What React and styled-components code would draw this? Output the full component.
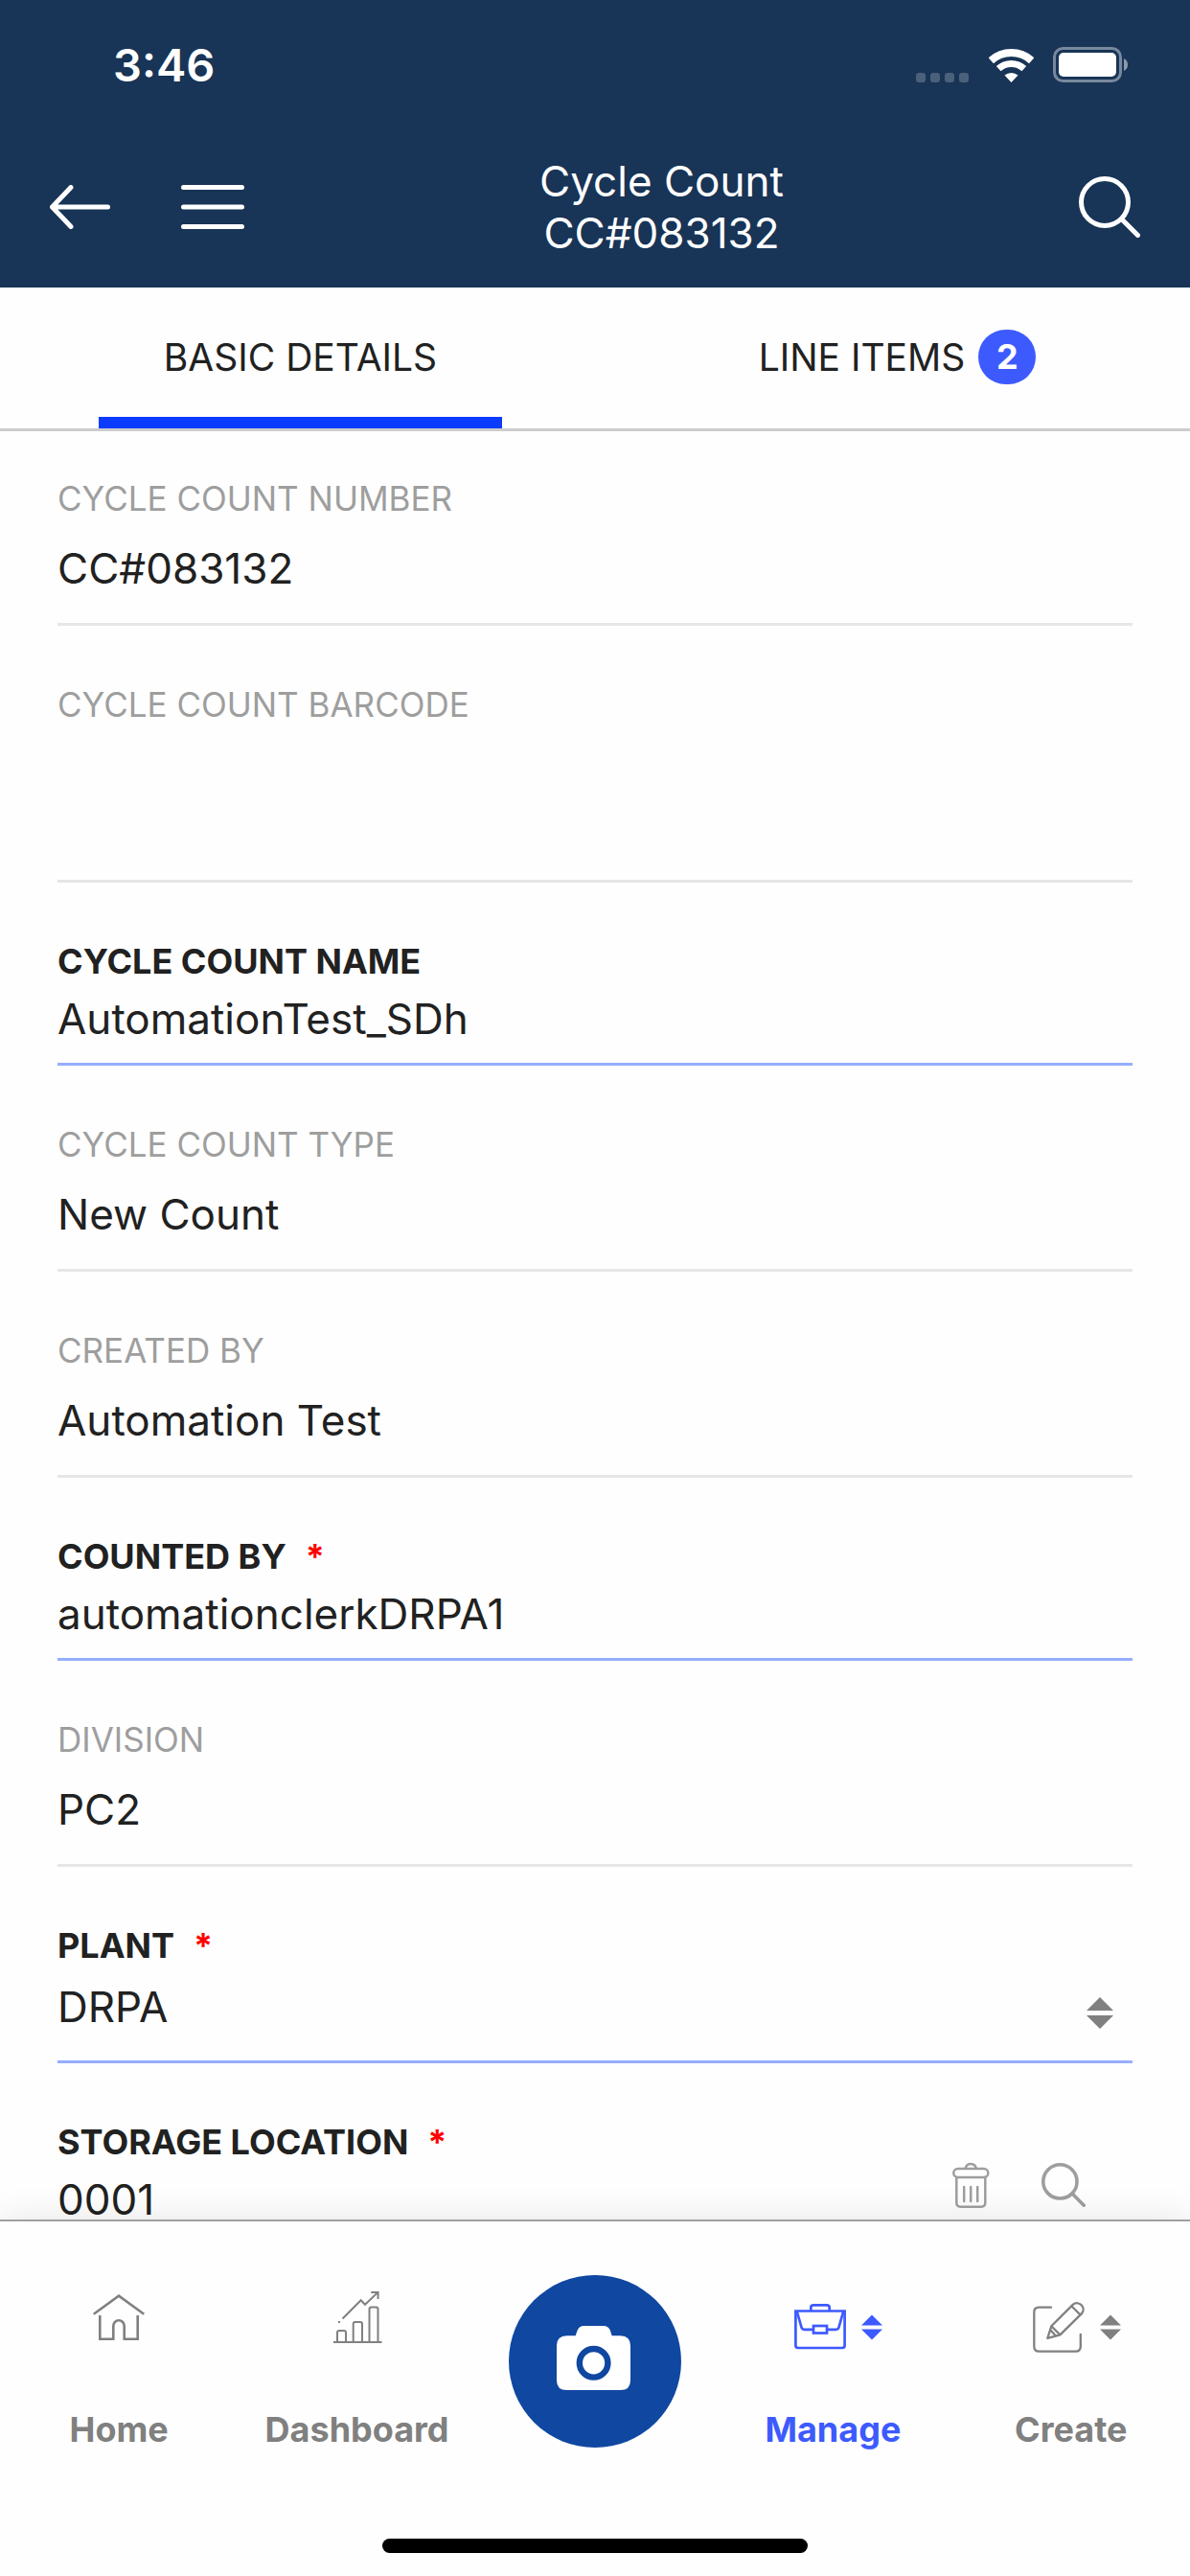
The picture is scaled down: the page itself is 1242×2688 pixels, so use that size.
import React, { useState } from 'react';
import styled, { createGlobalStyle } from 'styled-components';

const GlobalStyle = createGlobalStyle`
  * {
    box-sizing: border-box;
  }

  body {
    margin: 0;
    background: #fefefe;
    color: #212121;
    font-family: Inter, 'Liberation Sans', sans-serif;
  }

  button,
  input,
  select {
    margin: 0;
    padding: 0;
    border: 0;
    background: none;
    color: inherit;
    font-family: inherit;
  }

  svg {
    display: block;
    flex: none;
  }
`;

const Screen = styled.div`
  display: flex;
  flex-direction: column;
  height: 100vh;
`;

const Header = styled.header`
  flex: none;
  background: #183456;
  color: white;
`;

const StatusBar = styled.div`
  display: flex;
  align-items: center;
  justify-content: space-between;
  height: 132px;
  padding: 3px 64px 0 118px;
  font-size: 47px;
  font-weight: 600;
`;

const StatusIcons = styled.div`
  display: flex;
  align-items: center;
  gap: 20px;
`;

const Toolbar = styled.div`
  display: flex;
  align-items: center;
  height: 168px;
  padding: 0 52px;
`;

const IconButton = styled.button`
  cursor: pointer;
`;

const ToolbarLeft = styled.div`
  display: flex;
  align-items: center;
  gap: 74px;
`;

const Title = styled.h1`
  flex: 1;
  margin: 0;
  font-size: 44px;
  font-weight: 400;
  line-height: 54px;
  text-align: center;
`;

const Tabs = styled.div`
  display: grid;
  grid-template-columns: 1fr 1fr;
  gap: 202px;
  flex: none;
  height: 150px;
  padding: 0 95px 0 103px;
  border-bottom: 3px solid #ccc;
`;

const Tab = styled.button`
  display: flex;
  align-items: center;
  justify-content: center;
  gap: 14px;
  padding-top: 10px;
  border-bottom: 12px solid ${props => (props.$active ? '#0b3bfc' : 'transparent')};
  font-size: 39px;
  white-space: nowrap;
  cursor: pointer;
`;

const Badge = styled.span`
  width: 60px;
  border-radius: 30px;
  background: #3d5afe;
  color: white;
  font-size: 36px;
  font-weight: 700;
  line-height: 57px;
`;

const FormWrapper = styled.form`
  display: flex;
  flex-direction: column;
  flex: 1;
  gap: 58px;
  min-height: 0;
  padding: 46px 60px 58px;
  overflow: auto;
  scrollbar-width: none;
`;

const FormField = styled.div`
  display: flex;
  flex: none;
  border-bottom: 3px solid ${props => (props.$editable ? '#96aeff' : '#e6e6e6')};
`;

const FieldBody = styled.div`
  display: flex;
  flex: 1;
  flex-direction: column;
  min-width: 0;
`;

const Label = styled.label`
  color: ${props => (props.$editable ? '#212121' : '#9e9e9e')};
  font-size: ${props => (props.$editable ? '36px' : '35px')};
  font-weight: ${props => (props.$editable ? 700 : 400)};
  line-height: 48px;
`;

const Required = styled.span`
  margin-left: 20px;
  color: red;
`;

const StyledInput = styled.input`
  width: 100%;
  height: 72px;
  margin: ${props => (props.readOnly ? '13px 0 21px' : '0 0 10px')};
  font-size: 44px;
  outline: none;
`;

const EmptyValue = styled(StyledInput)`
  height: 125px;
`;

const SelectRow = styled.div`
  display: flex;
  align-items: center;
  height: 96px;
  padding: 0 20px 4px 0;
`;

const StyledSelect = styled.select`
  flex: 1;
  height: 72px;
  margin-bottom: 12px;
  appearance: none;
  font-size: 44px;
  outline: none;
`;

const FieldActions = styled.div`
  display: flex;
  align-items: center;
  gap: 54px;
  padding: 8px 49px 0 0;
  color: #9e9e9e;
`;

const BottomBar = styled.footer`
  position: relative;
  flex: none;
  padding-bottom: 24px;
  border-top: 2px solid #a0a0a0;
  background: #fefefe;
  box-shadow: 0 0 36px rgba(0, 0, 0, 0.1);
`;

const Nav = styled.nav`
  display: grid;
  grid-template-columns: repeat(5, 1fr);
  justify-items: center;
  height: 242px;
  padding-top: 56px;
`;

const NavLink = styled.a`
  display: flex;
  flex-direction: column;
  align-items: center;
  gap: 56px;
  padding-top: 7px;
  color: ${props => (props.$active ? '#3d5afe' : '#808080')};
  font-size: 36px;
  font-weight: 700;
  line-height: 48px;
  text-decoration: none;
`;

const NavIcon = styled.span`
  display: flex;
  align-items: center;
  gap: 16px;
  height: 74px;
  padding: ${props => (props.$menu ? '20px 0 0 12px' : '0')};
`;

const CameraButton = styled.button`
  display: flex;
  align-items: center;
  justify-content: center;
  width: 180px;
  height: 180px;
  border-radius: 50%;
  background: #0f47a1;
  cursor: pointer;
`;

const HomeIndicator = styled.div`
  width: 444px;
  height: 15px;
  margin: 89px auto 0;
  border-radius: 8px;
  background: black;
`;

const SignalIcon = () => (
  <svg width="56" height="36" fill="#fff" opacity="0.22">
    <rect x="0" y="26" width="10" height="10" rx="3" />
    <rect x="15" y="26" width="10" height="10" rx="3" />
    <rect x="30" y="26" width="10" height="10" rx="3" />
    <rect x="45" y="26" width="10" height="10" rx="3" />
  </svg>
);

const WifiIcon = () => (
  <svg width="47" height="36" fill="none" stroke="#fff">
    <path d="M2.3 13.2A31.5 31.5 0 0 1 44.7 13.2" strokeWidth="8" />
    <path d="M10.2 21.6A19.6 19.6 0 0 1 36.8 21.6" strokeWidth="7" />
    <path d="M23.5 36L16.5 28.6A10.5 10.5 0 0 1 30.5 28.6Z" fill="#fff" stroke="none" />
  </svg>
);

const BatteryIcon = () => (
  <svg width="79" height="37" fill="#fff">
    <rect x="1.5" y="1.5" width="69" height="34" rx="9" fill="none" stroke="#fff" strokeWidth="3" opacity="0.42" />
    <rect x="6" y="6" width="60" height="25" rx="5" />
    <path d="M74 12Q78 14 78 18.5T74 25Z" opacity="0.5" />
  </svg>
);

const BackIcon = () => (
  <svg width="63" height="46" fill="none" stroke="#fff" strokeWidth="5" strokeLinecap="round" strokeLinejoin="round">
    <path d="M60.5 23H2.5M22 2.5L2.5 23L22 43.5" />
  </svg>
);

const MenuIcon = () => (
  <svg width="66" height="46" stroke="#fff" strokeWidth="5" strokeLinecap="round">
    <path d="M2.5 2.5H63.5M2.5 23H63.5M2.5 43.5H63.5" />
  </svg>
);

const SearchIcon = ({ size }) => (
  <svg width={size} height={size} viewBox="0 0 64 64" fill="none" stroke="currentColor" strokeWidth="5" strokeLinecap="round">
    <circle cx="27" cy="27" r="24.5" />
    <path d="M45 45L61.5 61.5" />
  </svg>
);

const TrashIcon = () => (
  <svg width="39" height="48" fill="none" stroke="currentColor" strokeWidth="2.5" strokeLinecap="round">
    <path d="M13.7 6.5A5.6 5.6 0 0 1 24.7 6.5" />
    <rect x="1.3" y="7" width="36" height="9" rx="4.5" />
    <path d="M4.3 16V42.5Q4.3 46.7 8.5 46.7H30Q34.3 46.7 34.3 42.5V16M12.2 26V41M19.2 26V41M26.2 26V41" />
  </svg>
);

const SortIcon = ({ width, height }) => (
  <svg width={width} height={height} viewBox="0 0 28 33" fill={width > 24 ? '#808080' : 'currentColor'}>
    <path d="M14 0L28 14H0ZM0 19H28L14 33Z" />
  </svg>
);

const HomeIcon = () => (
  <svg width="54" height="48" fill="none" stroke="currentColor" strokeWidth="2.6">
    <path d="M.7 20.8L27 1.6L53.3 20.8" />
    <path d="M7.3 22V46.7H21.3V33A5.6 5.6 0 0 1 32.7 33V46.7H46.7V22" />
  </svg>
);

const DashboardIcon = () => (
  <svg width="52" height="54" fill="none" stroke="currentColor" strokeWidth="2">
    <path d="M1 53H51.5" />
    <path d="M5 53V43Q5 41 7 41H12Q14 41 14 43V53M21.7 53V34Q21.7 32 23.7 32H29Q31 32 31 34V53M38.5 53V18.5Q38.5 16.5 40.5 16.5H45.5Q47.5 16.5 47.5 18.5V53" />
    <path d="M10.5 28.5L29.7 9.3L34 13.8L47 1.4M40.3 1H47.6V8M6 32H8" />
  </svg>
);

const BriefcaseIcon = () => (
  <svg width="54" height="48" fill="none" stroke="currentColor" strokeWidth="2.7">
    <path d="M1.4 7.5H52.6V43.5Q52.6 46 50 46H4Q1.4 46 1.4 43.5Z" />
    <path d="M17.3 7.5V4Q17.3 1.4 20 1.4H34Q36.7 1.4 36.7 4V7.5" />
    <path d="M2.8 8L7.5 24.5Q8.2 26.8 10.5 26.8H20M51.2 8L46.5 24.5Q45.8 26.8 43.5 26.8H34" />
    <rect x="20" y="23" width="14" height="7.5" />
  </svg>
);

const CreateIcon = () => (
  <svg width="54" height="54" fill="none" stroke="currentColor" strokeWidth="2.3" strokeLinecap="round" strokeLinejoin="round">
    <path d="M19 6.7H6.3Q1.3 6.7 1.3 11.7V47.5Q1.3 52.7 6.5 52.7H44.5Q49.8 52.7 49.8 47.5V34.8" />
    <path d="M15.3 38.8L19.3 26.3L42 3.6A6.6 6.6 0 0 1 51.2 12.9L28.4 35.4L15.3 38.8M19.3 26.3L28.4 35.4M19 31L23.5 36M40.5 5.5L49.3 14.3" />
  </svg>
);

const CameraIcon = () => (
  <svg width="80" height="74">
    <path
      fill="#fff"
      d="M10.5 10.3H19.7L21.5 5Q23.4 0 28.5 0H48.8Q54 0 56 5L57.6 10.3H66.5Q77 10.8 77 20.5V57Q77 67 66.5 67H10.5Q0 67 0 57V20.5Q0 10.8 10.5 10.3Z"
    />
    <circle cx="38.6" cy="38.8" r="14.8" fill="none" stroke="#0f47a1" strokeWidth="6.4" />
  </svg>
);

const FieldLabel = ({ id, text, editable, required }) => (
  <Label htmlFor={id} $editable={editable}>
    {text}
    {required && <Required>*</Required>}
  </Label>
);

const ReadOnlyField = ({ id, label, value }) => (
  <FormField>
    <FieldBody>
      <FieldLabel id={id} text={label} />
      {value ? (
        <StyledInput id={id} type="text" value={value} readOnly />
      ) : (
        <EmptyValue id={id} type="text" value="" readOnly />
      )}
    </FieldBody>
  </FormField>
);

const TextField = ({ id, label, value, onChange, required, children }) => (
  <FormField $editable>
    <FieldBody>
      <FieldLabel id={id} text={label} required={required} editable />
      <StyledInput id={id} name={id} type="text" value={value} onChange={onChange} />
    </FieldBody>
    {children}
  </FormField>
);

const App = () => {
  const [activeTab, setActiveTab] = useState('basic');
  const [values, setValues] = useState({
    name: 'AutomationTest_SDh',
    countedBy: 'automationclerkDRPA1',
    plant: 'DRPA',
    storage: '0001'
  });

  const handleChange = event => {
    setValues({ ...values, [event.target.name]: event.target.value });
  };

  const clearStorage = () => {
    setValues({ ...values, storage: '' });
  };

  return (
    <>
      <GlobalStyle />
      <Screen>
        <Header>
          <StatusBar>
            <span>3:46</span>
            <StatusIcons>
              <SignalIcon />
              <WifiIcon />
              <BatteryIcon />
            </StatusIcons>
          </StatusBar>
          <Toolbar>
            <ToolbarLeft>
              <IconButton type="button" aria-label="Back">
                <BackIcon />
              </IconButton>
              <IconButton type="button" aria-label="Menu">
                <MenuIcon />
              </IconButton>
            </ToolbarLeft>
            <Title>
              Cycle Count
              <br />
              CC#083132
            </Title>
            <IconButton type="button" aria-label="Search">
              <SearchIcon size={64} />
            </IconButton>
          </Toolbar>
        </Header>
        <Tabs role="tablist">
          <Tab
            type="button"
            role="tab"
            aria-selected={activeTab === 'basic'}
            $active={activeTab === 'basic'}
            onClick={() => setActiveTab('basic')}
          >
            BASIC DETAILS
          </Tab>
          <Tab
            type="button"
            role="tab"
            aria-selected={activeTab === 'lines'}
            $active={activeTab === 'lines'}
            onClick={() => setActiveTab('lines')}
          >
            LINE ITEMS
            <Badge>2</Badge>
          </Tab>
        </Tabs>
        <FormWrapper>
          <ReadOnlyField id="number" label="CYCLE COUNT NUMBER" value="CC#083132" />
          <ReadOnlyField id="barcode" label="CYCLE COUNT BARCODE" />
          <TextField id="name" label="CYCLE COUNT NAME" value={values.name} onChange={handleChange} />
          <ReadOnlyField id="type" label="CYCLE COUNT TYPE" value="New Count" />
          <ReadOnlyField id="createdBy" label="CREATED BY" value="Automation Test" />
          <TextField
            id="countedBy"
            label="COUNTED BY"
            value={values.countedBy}
            onChange={handleChange}
            required
          />
          <ReadOnlyField id="division" label="DIVISION" value="PC2" />
          <FormField $editable>
            <FieldBody>
              <FieldLabel id="plant" text="PLANT" editable required />
              <SelectRow>
                <StyledSelect id="plant" name="plant" value={values.plant} onChange={handleChange}>
                  <option value="DRPA">DRPA</option>
                </StyledSelect>
                <SortIcon width={28} height={33} />
              </SelectRow>
            </FieldBody>
          </FormField>
          <TextField
            id="storage"
            label="STORAGE LOCATION"
            value={values.storage}
            onChange={handleChange}
            required
          >
            <FieldActions>
              <IconButton type="button" aria-label="Clear storage location" onClick={clearStorage}>
                <TrashIcon />
              </IconButton>
              <IconButton type="button" aria-label="Find storage location">
                <SearchIcon size={46} />
              </IconButton>
            </FieldActions>
          </TextField>
        </FormWrapper>
        <BottomBar>
          <Nav>
            <NavLink href="#home">
              <NavIcon>
                <HomeIcon />
              </NavIcon>
              Home
            </NavLink>
            <NavLink href="#dashboard">
              <NavIcon>
                <DashboardIcon />
              </NavIcon>
              Dashboard
            </NavLink>
            <CameraButton type="button" aria-label="Scan">
              <CameraIcon />
            </CameraButton>
            <NavLink href="#manage" $active>
              <NavIcon $menu>
                <BriefcaseIcon />
                <SortIcon width={22} height={27} />
              </NavIcon>
              Manage
            </NavLink>
            <NavLink href="#create">
              <NavIcon $menu>
                <CreateIcon />
                <SortIcon width={22} height={27} />
              </NavIcon>
              Create
            </NavLink>
          </Nav>
          <HomeIndicator />
        </BottomBar>
      </Screen>
    </>
  );
};

export default App;
